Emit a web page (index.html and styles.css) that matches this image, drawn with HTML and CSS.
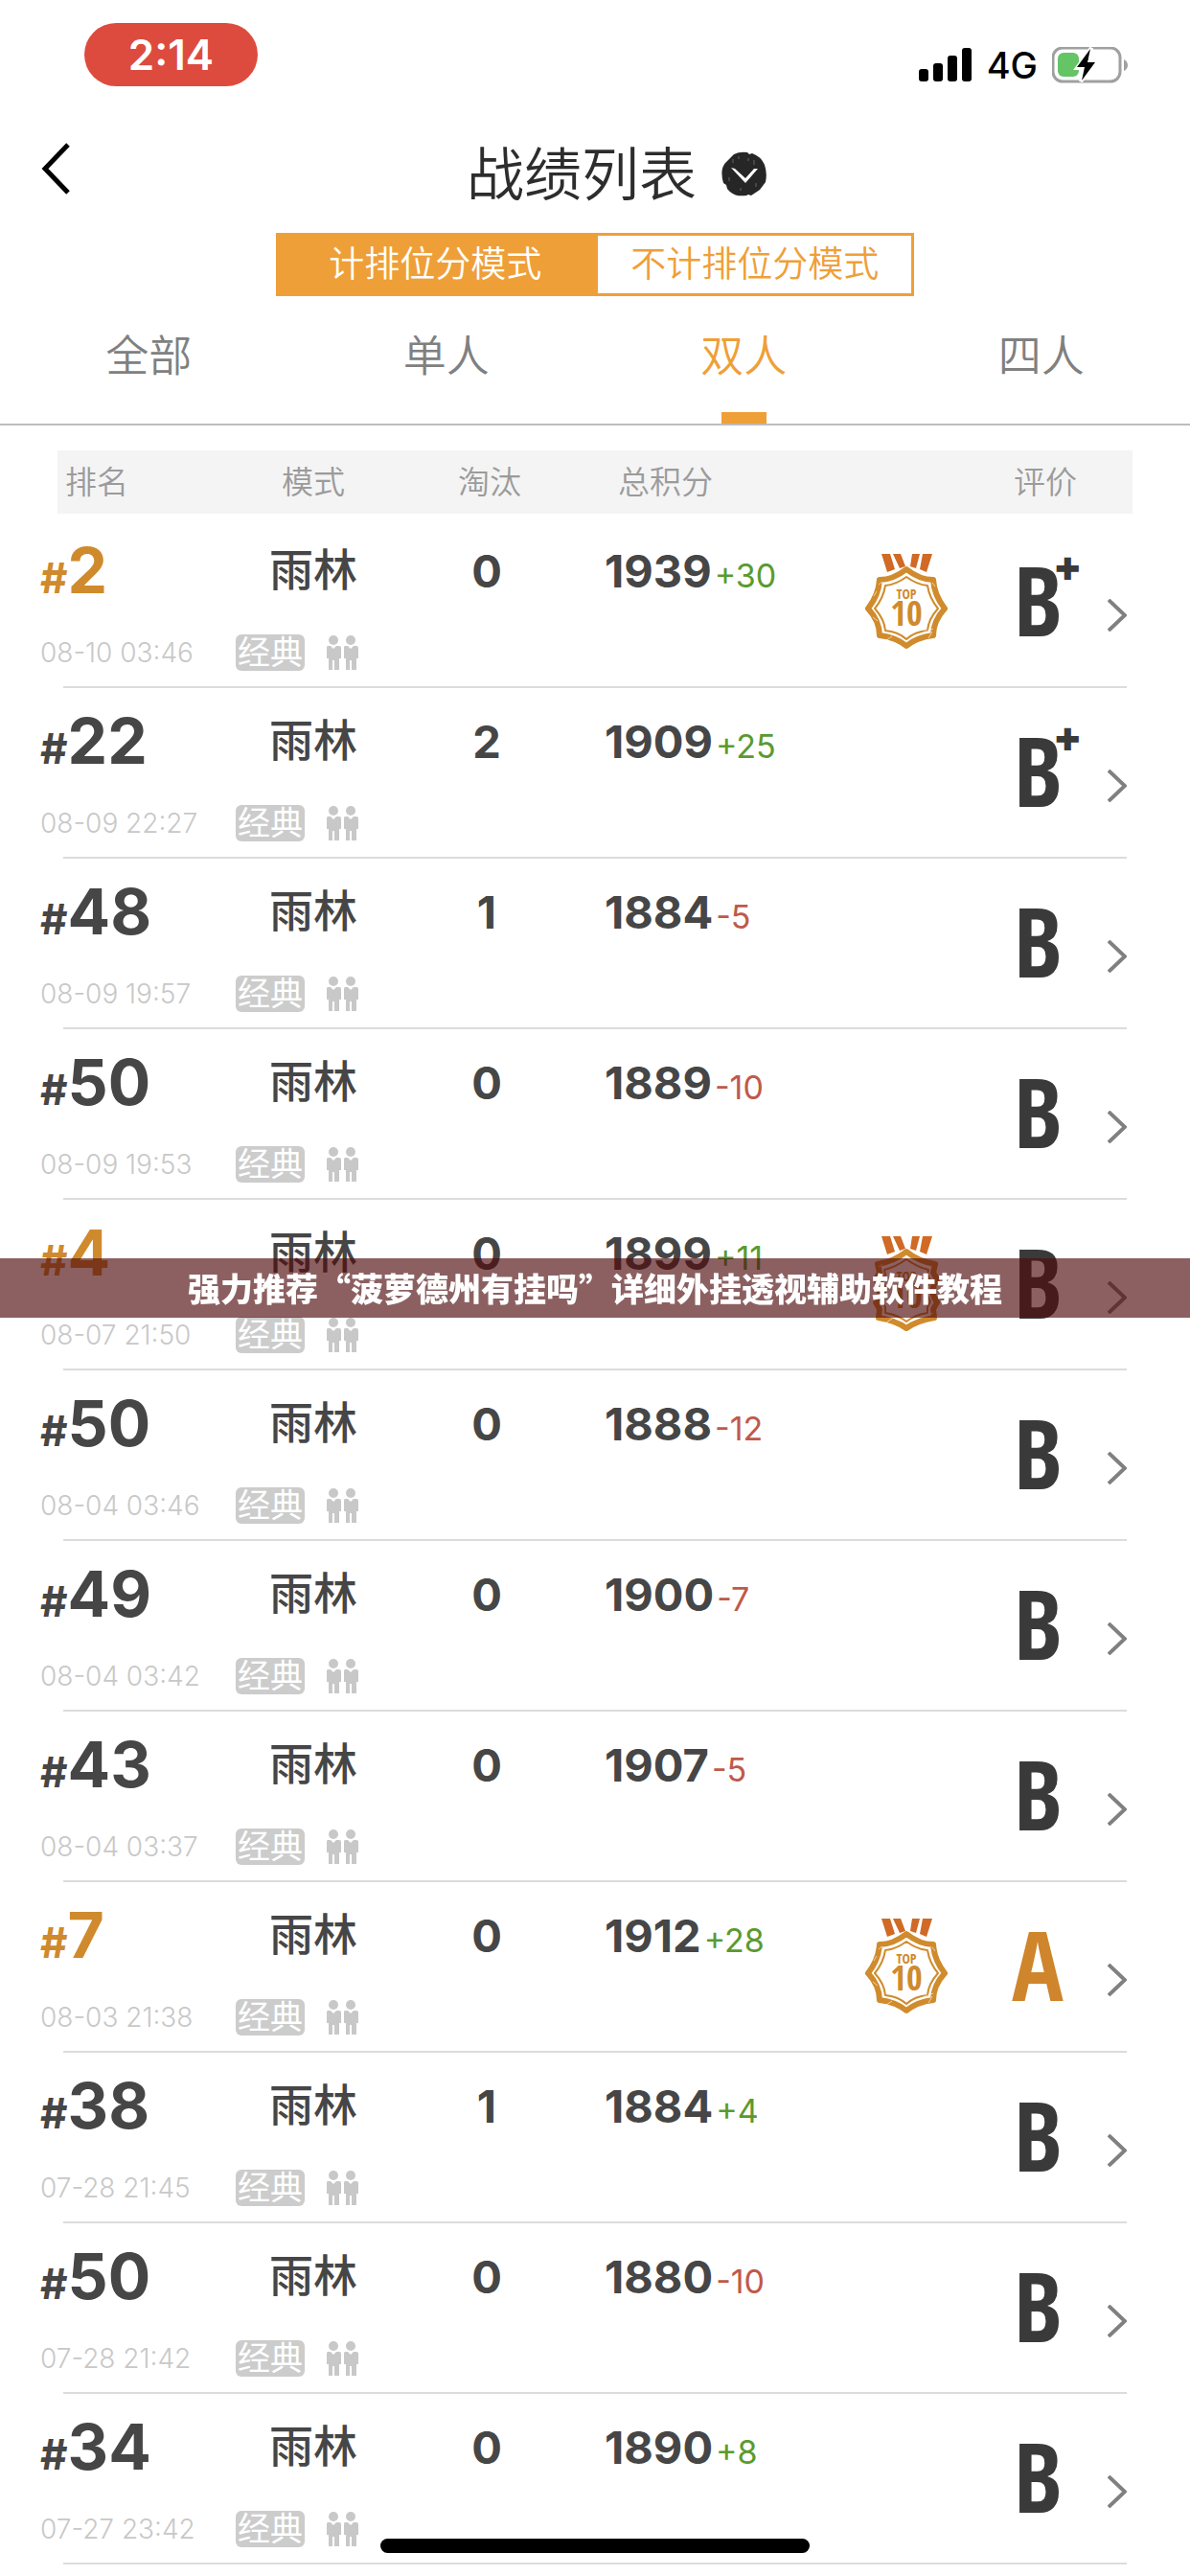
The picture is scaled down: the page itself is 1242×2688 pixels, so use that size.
FILE: index.html
```html
<!DOCTYPE html>
<html lang="zh-CN">
<head>
<meta charset="utf-8">
<meta name="viewport" content="width=device-width, initial-scale=1">
<title>战绩列表</title>
<link rel="stylesheet" href="styles.css">
</head>
<body>
<svg class="sprite" aria-hidden="true">
  <symbol id="pair" viewBox="0 0 34 37">
    <g id="person">
      <circle cx="8" cy="5" r="5"/>
      <path d="M2 11h3l3 3 3-3h3q2 0 2 2v11h-2v12h-5v-10h-2v10H3V24H1V13q0-2 1-2z"/>
    </g>
    <use href="#person" x="18"/>
  </symbol>
  <symbol id="ribbons" viewBox="0 0 86 20">
    <path d="M17 0h9l5 16-8 3zM29 0h8l5 13-6 2zM49 0h8l-4 15-6-2zM60 0h10l-6 19-7-3z"/>
  </symbol>
  <symbol id="medal" viewBox="0 0 86 100">
    <use href="#ribbons" width="86" height="20" class="ribbon"/>
    <g class="medal-ring">
      <path stroke-width="6" d="M43 16Q57 27 71 27Q72 43 83 57Q71 70 71 85Q54 87 43 96Q32 87 15 85Q15 70 3 57Q14 43 15 27Q29 27 43 16Z"/>
      <path stroke-width="2" d="M43 24Q54 32 65 33Q67 46 76 57Q66 68 65 80Q52 81 43 89Q34 81 21 80Q20 68 10 57Q19 46 21 33Q32 32 43 24Z"/>
      <path class="wear" d="M60 82l11-4M66 88l4-7M22 90l6-4M9 44l3-5M8 66l5 4M14 32l4-3M70 30l3 4"/>
    </g>
  </symbol>
  <symbol id="shield" viewBox="0 0 86 100">
    <use href="#ribbons" width="86" height="20" class="ribbon"/>
    <g class="medal-ring">
      <path stroke-width="6" d="M43 16Q55 26 73 29L71 38L75 45Q66 57 75 69L71 76L72 85Q54 88 43 96Q32 88 14 85L15 76L11 69Q20 57 11 45L15 38L13 29Q31 26 43 16Z"/>
      <path stroke-width="2" d="M43 24Q54 32 66 35L65 40L68 47Q61 57 68 68L65 74V80Q52 82 43 89Q34 82 21 80V74L18 68Q25 57 18 47L21 40L20 35Q32 32 43 24Z"/>
      <path class="wear" d="M60 84l11-4M22 90l6-4M12 42l4-4M14 32l4-3"/>
    </g>
  </symbol>
  <symbol id="more" viewBox="0 0 20 34">
    <path d="M1 1l17 16L1 33" fill="none" stroke="#808080" stroke-width="4"/>
  </symbol>
</svg>

<header class="status">
  <span class="clock">2:14</span>
  <div class="signals">
    <svg width="56" height="36" viewBox="0 0 56 36" aria-hidden="true">
      <rect y="22" width="10" height="13" rx="3"/><rect x="15" y="16" width="10" height="19" rx="3"/><rect x="30" y="8" width="10" height="27" rx="3"/><rect x="45" width="10" height="35" rx="3"/>
    </svg>
    <span class="network">4G</span>
    <svg width="79" height="38" viewBox="0 0 79 38" aria-hidden="true">
      <rect x="1" y="1" width="70" height="35" rx="10" fill="none" stroke="#a0a0a0" stroke-width="3"/>
      <path d="M75 13q4 2 4 6t-4 6z" fill="#a0a0a0"/>
      <rect x="6" y="6" width="22" height="25" rx="6" fill="#65c466"/>
      <path d="M41 1L26 22h7l-3 14 16-21h-7z" stroke="#fff" stroke-width="4"/>
      <path d="M40 2L26 21h8l-3 14 14-19h-8z"/>
    </svg>
  </div>
</header>

<nav class="titlebar">
  <button class="back" aria-label="返回">
    <svg width="32" height="54" viewBox="0 0 32 54" aria-hidden="true"><path d="M28 2L4 27l24 25" fill="none" stroke="#000" stroke-width="5"/></svg>
  </button>
  <h1>战绩列表</h1>
  <button class="season" aria-label="选择赛季">
    <svg width="48" height="48" viewBox="0 0 48 48" aria-hidden="true">
      <path d="M13 3Q19 0 27 1l2 2 3-1q9 3 13 12 3 9 1 18l-6 8-9 6-3-1-2 1Q13 48 6 39l-1-4-3-2Q-2 19 4 12z" fill="#262626"/>
      <path d="M10 17l4 1 11 10 9-10 4 0-13 15z" fill="#fff"/>
      <path d="M12 8v4M18 5v3M34 9v5M8 27v4M36 33v4M20 38v3M28 7v3" stroke="#666"/>
    </svg>
  </button>
</nav>

<div class="segments">
  <button class="segment segment-on">计排位分模式</button>
  <button class="segment">不计排位分模式</button>
</div>

<nav class="tabs">
  <button class="tab">全部</button>
  <button class="tab">单人</button>
  <button class="tab tab-on">双人</button>
  <button class="tab">四人</button>
</nav>

<main>
<table class="records">
<thead><tr><th class="h-rank">排名</th><th>模式</th><th class="h-kills">淘汰</th><th class="h-score">总积分</th><td></td><th class="h-grade">评价</th><td></td></tr></thead>
<tbody>
<tr><td class="rank top"><b><i>#</i>2</b><time>08-10 03:46</time></td><td class="mode"><span>雨林</span><div><em>经典</em><svg class="pair"><use href="#pair"/></svg></div></td><td class="kills">0</td><td class="score">1939<span class="up">+30</span></td><td class="award"><svg class="medal" viewBox="0 0 86 100"><use href="#medal"/><text x="43" y="47" font-size="14">TOP</text><text x="43" y="75" font-size="36">10</text></svg></td><td class="grade"><span>B</span><sup>+</sup></td><td class="go"><a href="#r1" aria-label="详情"><svg class="more"><use href="#more"/></svg></a></td></tr>
<tr><td class="rank"><b><i>#</i>22</b><time>08-09 22:27</time></td><td class="mode"><span>雨林</span><div><em>经典</em><svg class="pair"><use href="#pair"/></svg></div></td><td class="kills">2</td><td class="score">1909<span class="up">+25</span></td><td class="award"></td><td class="grade"><span>B</span><sup>+</sup></td><td class="go"><a href="#r2" aria-label="详情"><svg class="more"><use href="#more"/></svg></a></td></tr>
<tr><td class="rank"><b><i>#</i>48</b><time>08-09 19:57</time></td><td class="mode"><span>雨林</span><div><em>经典</em><svg class="pair"><use href="#pair"/></svg></div></td><td class="kills">1</td><td class="score">1884<span class="down">-5</span></td><td class="award"></td><td class="grade"><span>B</span><sup></sup></td><td class="go"><a href="#r3" aria-label="详情"><svg class="more"><use href="#more"/></svg></a></td></tr>
<tr><td class="rank"><b><i>#</i>50</b><time>08-09 19:53</time></td><td class="mode"><span>雨林</span><div><em>经典</em><svg class="pair"><use href="#pair"/></svg></div></td><td class="kills">0</td><td class="score">1889<span class="down">-10</span></td><td class="award"></td><td class="grade"><span>B</span><sup></sup></td><td class="go"><a href="#r4" aria-label="详情"><svg class="more"><use href="#more"/></svg></a></td></tr>
<tr><td class="rank top"><b><i>#</i>4</b><time>08-07 21:50</time></td><td class="mode"><span>雨林</span><div><em>经典</em><svg class="pair"><use href="#pair"/></svg></div></td><td class="kills">0</td><td class="score">1899<span class="up">+11</span></td><td class="award"><svg class="medal" viewBox="0 0 86 100"><use href="#shield"/><text x="43" y="47" font-size="14">TOP</text><text x="43" y="75" font-size="36">10</text></svg></td><td class="grade"><span>B</span><sup></sup></td><td class="go"><a href="#r5" aria-label="详情"><svg class="more"><use href="#more"/></svg></a></td></tr>
<tr><td class="rank"><b><i>#</i>50</b><time>08-04 03:46</time></td><td class="mode"><span>雨林</span><div><em>经典</em><svg class="pair"><use href="#pair"/></svg></div></td><td class="kills">0</td><td class="score">1888<span class="down">-12</span></td><td class="award"></td><td class="grade"><span>B</span><sup></sup></td><td class="go"><a href="#r6" aria-label="详情"><svg class="more"><use href="#more"/></svg></a></td></tr>
<tr><td class="rank"><b><i>#</i>49</b><time>08-04 03:42</time></td><td class="mode"><span>雨林</span><div><em>经典</em><svg class="pair"><use href="#pair"/></svg></div></td><td class="kills">0</td><td class="score">1900<span class="down">-7</span></td><td class="award"></td><td class="grade"><span>B</span><sup></sup></td><td class="go"><a href="#r7" aria-label="详情"><svg class="more"><use href="#more"/></svg></a></td></tr>
<tr><td class="rank"><b><i>#</i>43</b><time>08-04 03:37</time></td><td class="mode"><span>雨林</span><div><em>经典</em><svg class="pair"><use href="#pair"/></svg></div></td><td class="kills">0</td><td class="score">1907<span class="down">-5</span></td><td class="award"></td><td class="grade"><span>B</span><sup></sup></td><td class="go"><a href="#r8" aria-label="详情"><svg class="more"><use href="#more"/></svg></a></td></tr>
<tr><td class="rank top"><b><i>#</i>7</b><time>08-03 21:38</time></td><td class="mode"><span>雨林</span><div><em>经典</em><svg class="pair"><use href="#pair"/></svg></div></td><td class="kills">0</td><td class="score">1912<span class="up">+28</span></td><td class="award"><svg class="medal" viewBox="0 0 86 100"><use href="#medal"/><text x="43" y="47" font-size="14">TOP</text><text x="43" y="75" font-size="36">10</text></svg></td><td class="grade grade-a"><span>A</span><sup></sup></td><td class="go"><a href="#r9" aria-label="详情"><svg class="more"><use href="#more"/></svg></a></td></tr>
<tr><td class="rank"><b><i>#</i>38</b><time>07-28 21:45</time></td><td class="mode"><span>雨林</span><div><em>经典</em><svg class="pair"><use href="#pair"/></svg></div></td><td class="kills">1</td><td class="score">1884<span class="up">+4</span></td><td class="award"></td><td class="grade"><span>B</span><sup></sup></td><td class="go"><a href="#r10" aria-label="详情"><svg class="more"><use href="#more"/></svg></a></td></tr>
<tr><td class="rank"><b><i>#</i>50</b><time>07-28 21:42</time></td><td class="mode"><span>雨林</span><div><em>经典</em><svg class="pair"><use href="#pair"/></svg></div></td><td class="kills">0</td><td class="score">1880<span class="down">-10</span></td><td class="award"></td><td class="grade"><span>B</span><sup></sup></td><td class="go"><a href="#r11" aria-label="详情"><svg class="more"><use href="#more"/></svg></a></td></tr>
<tr><td class="rank"><b><i>#</i>34</b><time>07-27 23:42</time></td><td class="mode"><span>雨林</span><div><em>经典</em><svg class="pair"><use href="#pair"/></svg></div></td><td class="kills">0</td><td class="score">1890<span class="up">+8</span></td><td class="award"></td><td class="grade"><span>B</span><sup></sup></td><td class="go"><a href="#r12" aria-label="详情"><svg class="more"><use href="#more"/></svg></a></td></tr>
</tbody>
</table>
</main>

<p class="banner">强力推荐“菠萝德州有挂吗”详细外挂透视辅助软件教程</p>
<div class="home-indicator"></div>
</body>
</html>
```
FILE: styles.css
```css
* { box-sizing: border-box; }

body {
  margin: 0;
  background: #fff;
  color: #464646;
  font-family: Inter, "Noto Sans CJK SC", sans-serif;
}

button {
  margin: 0;
  padding: 0;
  border: 0;
  background: none;
  color: inherit;
  font: inherit;
  cursor: pointer;
}

svg { display: block; }

.sprite {
  position: absolute;
  width: 0;
  height: 0;
}

/* status bar */
.status {
  display: flex;
  justify-content: space-between;
  align-items: flex-start;
  height: 134px;
  padding: 24px 65px 0 88px;
  color: #000;
}

.clock {
  width: 181px;
  border-radius: 33px;
  background: #dd4b3e;
  color: #fff;
  font-size: 44px;
  font-weight: 600;
  line-height: 66px;
  text-align: center;
}

.signals {
  display: flex;
  align-items: center;
  gap: 15px;
  padding-top: 25px;
}

.network {
  font-size: 38px;
  font-weight: 500;
  line-height: 38px;
}

/* title */
.titlebar {
  display: grid;
  grid-template-columns: 1fr auto 1fr;
  align-items: center;
  height: 96px;
  padding-right: 28px;
  color: #2d2d2d;
}

.back { justify-self: start; padding: 0 43px 12px; }

.season { justify-self: start; padding-left: 26px; }

h1 {
  margin: 0;
  font-size: 60px;
  font-weight: 350;
  line-height: 90px;
}

/* ranked / unranked switch */
.segments {
  display: flex;
  width: 54%;
  margin: 13px auto 0;
  padding: 0 2px;
  color: #ef9f38;
  font-size: 37px;
  font-weight: 350;
  line-height: 60px;
}

.segment {
  flex: 1;
  border: 3px solid #ef9f38;
}

.segment-on {
  background: #ef9f38;
  color: #fff;
}

/* team size tabs */
.tabs {
  display: grid;
  grid-template-columns: repeat(4, 1fr);
  border-bottom: 2px solid #bdbdbd;
  color: #808080;
  font-size: 45px;
  font-weight: 350;
  line-height: 64px;
}

.tab {
  display: grid;
  justify-items: center;
  gap: 26px;
  padding-top: 31px;
}

.tab::after {
  content: "";
  width: 47px;
  height: 12px;
}

.tab-on { color: #ef9f38; }
.tab-on::after { background: #ef9f38; }

/* match records */
main { padding-top: 26px; }

.records, .records thead, .records tbody { display: block; }

.records tr {
  display: grid;
  grid-template-columns: 180fr 162fr 200fr 278fr 120fr 130fr 40fr;
  margin: 0 66px;
}

.records th, .records td { min-width: 0; padding: 0; }

.records thead tr {
  margin: 0 60px 4px;
  padding: 0 6px;
  background: #f4f4f4;
  color: #9b9b9b;
  font-size: 33px;
  line-height: 66px;
}

.records th { font-weight: 350; }
.records .h-rank { padding-left: 2px; text-align: left; }
.records .h-kills { padding-left: 6px; }
.records .h-score { padding-left: 37px; text-align: left; }
.records .h-grade { padding-right: 12px; text-align: right; }

.records tbody tr {
  height: 178px;
  border-bottom: 2px solid #dcdcdc;
}

.records .rank { padding-top: 15px; }

.rank b, .rank time {
  display: block;
  margin-left: -24px;
  white-space: nowrap;
}

.rank b {
  font-size: 66px;
  font-weight: 700;
  line-height: 80px;
}

.rank i {
  font-size: 44px;
  font-style: normal;
  line-height: 0;
}

.top b { color: #cf8a2d; }

.rank time {
  padding-top: 27px;
  color: #c8c8c8;
  font-size: 28px;
  font-weight: 350;
  line-height: 38px;
}

.records .mode { padding-top: 16px; }

.mode span {
  display: block;
  font-size: 46px;
  font-weight: 500;
  line-height: 76px;
  text-align: center;
}

.mode div {
  display: flex;
  align-items: center;
  gap: 22px;
  padding-top: 30px;
}

.mode em {
  padding: 0 2px;
  border-radius: 6px;
  background: #ccc;
  color: #fff;
  font-size: 34px;
  font-style: normal;
  line-height: 38px;
  white-space: nowrap;
}

.pair { width: 34px; height: 37px; fill: #c8c8c8; }

.records .kills, .records .score {
  padding-top: 16px;
  font-size: 47px;
  font-weight: 700;
  line-height: 80px;
}

.kills { text-align: center; }
.records .score { padding-left: 23px; white-space: nowrap; }

.score span {
  padding-left: 3px;
  font-size: 34px;
  font-weight: 400;
  line-height: 0;
}

.score .up { color: #5a9a2f; }
.score .down { color: #c0594a; }

.records .award { padding-top: 38px; }
.medal { width: 86px; height: 100px; margin: 0 auto; }
.ribbon { fill: #d06a25; }
.medal-ring { fill: none; stroke: #d08b2c; stroke-linejoin: round; }
.medal-ring .wear { stroke: #fff; stroke-opacity: .6; }

.medal text {
  fill: #cf8a2d;
  font-family: "Open Sans Condensed", "Roboto Condensed", sans-serif;
  font-weight: 700;
  text-anchor: middle;
}

.records .grade {
  display: flex;
  justify-content: flex-end;
  padding: 38px 12px 0 0;
  color: #3a3a3a;
}

.grade span {
  display: flex;
  justify-content: center;
  width: 32px;
  font-family: "Open Sans Condensed", "Roboto Condensed", sans-serif;
  font-size: 100px;
  font-weight: 700;
  line-height: 94px;
}

.grade sup {
  width: 25px;
  font-size: 44px;
  font-weight: 900;
  line-height: 24px;
}

.records .grade-a { color: #cf852b; }

.records .go { padding-top: 85px; }
.more { width: 20px; height: 34px; margin-left: auto; }

/* overlays */
.banner {
  position: fixed;
  top: 50%;
  right: 0;
  left: 0;
  margin: -31px 0 0;
  background: rgba(78, 10, 12, .65);
  color: #fff;
  font-family: "Noto Sans CJK SC", sans-serif;
  font-size: 34px;
  font-weight: 900;
  line-height: 62px;
  text-align: center;
}

.home-indicator {
  position: fixed;
  right: 32%;
  bottom: 24px;
  left: 32%;
  height: 15px;
  border-radius: 8px;
  background: #000;
}
```
